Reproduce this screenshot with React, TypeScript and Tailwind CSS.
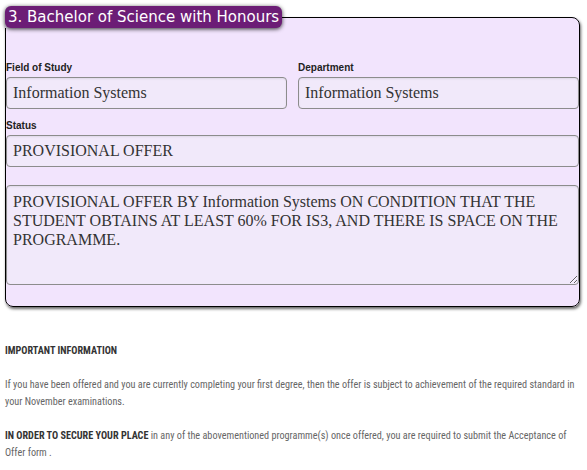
import React from "react";

const inputCls =
  "block w-full h-[32px] rounded-[4px] border border-[#8c8c8c] bg-[#f1e9fa] px-[6px] text-[16px] text-[#333] outline-none shadow-[inset_0_1px_2px_rgba(0,0,0,0.08)] font-['Liberation_Serif',serif]";
const labelCls =
  "block text-[10px] font-bold text-[#222] leading-[13px] mb-[3px] font-['Liberation_Sans',Arial,sans-serif]";

export default function App() {
  return (
    <div className="w-[587px] h-[470px] bg-white overflow-hidden">
      <div className="pl-[5px] pr-[7px] pt-[6px]">
        <fieldset className="rounded-[8px] border border-black bg-[#f2e4fd] pb-[21px] shadow-[1px_2px_3px_rgba(0,0,0,0.6)]">
          <legend className="ml-[-1px] rounded-[6px] bg-[#6c1d76] px-[3px] text-[15px] leading-[22px] text-white shadow-[0_1px_4px_rgba(0,0,0,0.8)] font-['DejaVu_Sans',Verdana,sans-serif]">
            3. Bachelor of Science with Honours
          </legend>
          <div className="mt-[33px] grid grid-cols-2 gap-x-[11px]">
            <div>
              <label className={labelCls}>Field of Study</label>
              <input className={inputCls} readOnly value="Information Systems" />
            </div>
            <div>
              <label className={labelCls}>Department</label>
              <input className={inputCls} readOnly value="Information Systems" />
            </div>
          </div>
          <div className="mt-[10px]">
            <label className={labelCls}>Status</label>
            <input className={inputCls} readOnly value="PROVISIONAL OFFER" />
          </div>
          <textarea
            className="mt-[18px] block h-[100px] w-full resize rounded-[4px] border border-[#8c8c8c] bg-[#f1e9fa] px-[6px] pt-[6px] text-[16px] leading-[19px] text-[#333] outline-none shadow-[inset_0_1px_2px_rgba(0,0,0,0.08)] font-['Liberation_Serif',serif]"
            readOnly
            defaultValue="PROVISIONAL OFFER BY Information Systems ON CONDITION THAT THE STUDENT OBTAINS AT LEAST 60% FOR IS3, AND THERE IS SPACE ON THE PROGRAMME."
          />
        </fieldset>
      </div>
      <div className="flex flex-col gap-[17px] px-[5px] pt-[35px] text-[10.2px] leading-[17px] text-[#666] font-['Roboto_Condensed','Liberation_Sans_Narrow','DejaVu_Sans_Condensed',sans-serif]">
        <p className="font-bold text-[#333]">IMPORTANT INFORMATION</p>
        <p>
          If you have been offered and you are currently completing your first degree, then the offer is subject to achievement of the required standard in your November examinations.
        </p>
        <p>
          <span className="font-bold text-[#333]">IN ORDER TO SECURE YOUR PLACE</span> in any of the abovementioned programme(s) once offered, you are required to submit the Acceptance of Offer form .
        </p>
      </div>
    </div>
  );
}
